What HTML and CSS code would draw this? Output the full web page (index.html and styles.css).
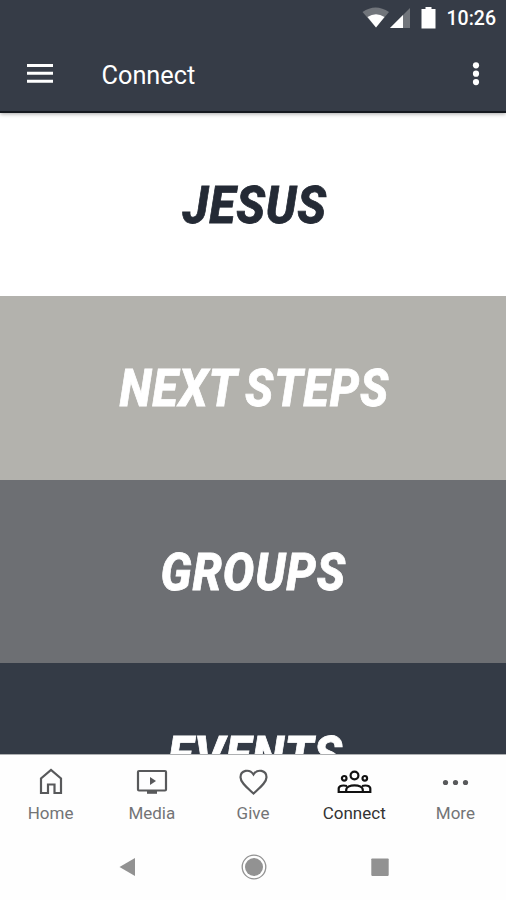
FILE: index.html
```html
<!DOCTYPE html>
<html lang="en">
<head>
<meta charset="utf-8">
<title>Connect</title>
<link rel="stylesheet" href="styles.css">
</head>
<body>
<div class="app">
  <header class="header">
    <div class="status">
      <svg class="status-icons" width="80" height="37" viewBox="0 0 80 37">
        <path d="M1.500 12Q14.500 3 28 12L15 27.500Z" fill="#71757b"/>
        <path d="M6.500 17Q15 11.500 23.500 17L15 27.500Z" fill="#fff"/>
        <path d="M49 8V28H29Z" fill="#71757b"/>
        <path d="M42 15V28H29Z" fill="#fff"/>
        <path d="M64.500 7h6v2h4v19.500H60.500V9h4z" fill="#fff"/>
      </svg>
      <span class="clock">10:26</span>
    </div>
    <div class="toolbar">
      <svg class="menu" width="28" height="22" viewBox="0 0 28 22"><path d="M1 2.500h26M1 10.300h26M1 18.200h26" stroke="#fff" stroke-width="3"/></svg>
      <h1 class="title">Connect</h1>
      <svg class="overflow" width="8" height="26" viewBox="0 0 8 26" fill="#fff"><circle cx="4" cy="4.300" r="3.100"/><circle cx="4" cy="12.700" r="3.100"/><circle cx="4" cy="21.100" r="3.100"/></svg>
    </div>
  </header>
  <main class="tiles">
    <section class="tile jesus"><svg width="506" height="184"><text x="182.500" y="110" textLength="144.500" lengthAdjust="spacingAndGlyphs">JESUS</text></svg></section>
    <section class="tile next"><svg width="506" height="184"><text x="119.500" y="110" textLength="269.500" lengthAdjust="spacingAndGlyphs">NEXT STEPS</text></svg></section>
    <section class="tile groups"><svg width="506" height="183"><text x="160.500" y="110" textLength="185.500" lengthAdjust="spacingAndGlyphs">GROUPS</text></svg></section>
    <section class="tile events"><svg width="506" height="184"><text x="167.500" y="110" textLength="175.500" lengthAdjust="spacingAndGlyphs">EVENTS</text></svg></section>
  </main>
  <nav class="tabs">
    <a class="tab"><svg width="36" height="30" viewBox="0 0 36 30"><path d="M8 26V11.500L18 3l10 8.500V26h-6.500v-8.500h-6.500V26z"/></svg><span>Home</span></a>
    <a class="tab"><svg width="36" height="30" viewBox="0 0 36 30"><rect x="4" y="4" width="28" height="19.500" rx="1"/><path d="M13 25.300h10" stroke-width="3"/><path d="M16 10l6 4-6 4z" fill="#58595b" stroke="none"/></svg><span>Media</span></a>
    <a class="tab"><svg width="36" height="30" viewBox="0 0 36 30"><path d="M18.500 26.500C12.500 21 5.500 15.800 5.500 10.300C5.500 3 14.500 1.500 18.500 7.500C22.500 1.500 31.500 3 31.500 10.300C31.500 15.800 24.500 21 18.500 26.500Z"/></svg><span>Give</span></a>
    <a class="tab active"><svg width="36" height="30" viewBox="0 0 36 30"><circle cx="18.500" cy="8.500" r="3.900"/><circle cx="8.200" cy="11.300" r="2.300"/><circle cx="28.800" cy="11.300" r="2.300"/><path d="M10.200 25V23C10.200 16.700 26.800 16.700 26.800 23V25ZM10.200 25H2.700V21.500C2.700 18.500 7.500 18 11 19M26.800 25H34.300V21.500C34.300 18.500 29.500 18 26 19"/></svg><span>Connect</span></a>
    <a class="tab"><svg width="36" height="30" viewBox="0 0 36 30"><g fill="#58595b" stroke="none"><circle cx="8.500" cy="15.500" r="2.600"/><circle cx="18.500" cy="15.500" r="2.600"/><circle cx="28.500" cy="15.500" r="2.600"/></g></svg><span>More</span></a>
  </nav>
  <footer class="system">
    <svg width="28" height="28" viewBox="0 0 28 28"><path d="M6.500 14L22 5v18z"/></svg>
    <svg width="28" height="28" viewBox="0 0 28 28"><circle cx="14" cy="14" r="9"/><circle cx="14" cy="14" r="11.800" fill="none" stroke="#929292" stroke-width="1.300"/></svg>
    <svg width="28" height="28" viewBox="0 0 28 28"><rect x="5.300" y="5.500" width="17.400" height="17.400" rx=".8"/></svg>
  </footer>
</div>
</body>
</html>
```
FILE: styles.css
```css
* { box-sizing: border-box; }
body { margin: 0; background: #fff; font-family: Roboto, "Liberation Sans", sans-serif; }
svg { display: block; flex-shrink: 0; }
.app { width: 506px; height: 900px; display: flex; flex-direction: column; overflow: hidden; background: #fefefe; }
.header { height: 113px; flex-shrink: 0; background: #363c47; border-bottom: 2px solid #15191f; color: #fff; position: relative; box-shadow: 0 1px 4px rgba(0, 0, 0, .35); }
.status { height: 37px; display: flex; justify-content: flex-end; padding-right: 10px; }
.status-icons { margin-right: 5px; }
.clock { font-size: 19.500px; font-weight: 500; line-height: 38px; width: 50px; text-align: right; white-space: nowrap; }
.toolbar { height: 74px; display: flex; align-items: center; padding: 0 26px; }
.title { margin: 0 0 0 47.500px; font-size: 25.300px; font-weight: 400; line-height: 32px; padding-top: 3px; }
.overflow { margin-left: auto; }
.tiles { height: 641px; flex-shrink: 0; overflow: hidden; }
.tile { height: 183px; overflow: hidden; }
.tile text { font-size: 51px; font-weight: 800; font-style: italic; letter-spacing: 1px; word-spacing: -4px; fill: #fff; stroke: #fff; stroke-width: .8px; }
.jesus { background: #fff; }
.jesus text { fill: #242a35; stroke: #242a35; }
.next { height: 184px; background: #b3b2ad; }
.groups { background: #6d6f73; }
.events { background: #343b46; }
.tabs { height: 79px; flex-shrink: 0; display: flex; border-top: 1px solid #aeb0b2; padding-top: 12px; }
.tab { flex: 1; display: flex; flex-direction: column; align-items: center; font-size: 17px; line-height: 22px; gap: 5px; color: #737476; }
.tab svg { fill: none; stroke: #58595b; stroke-width: 2.200; }
.tab.active { color: #333; }
.tab.active svg { stroke: #111; }
.system { flex: 1; display: flex; justify-content: space-between; padding: 20px 112px 0 113px; fill: #929292; }
```
